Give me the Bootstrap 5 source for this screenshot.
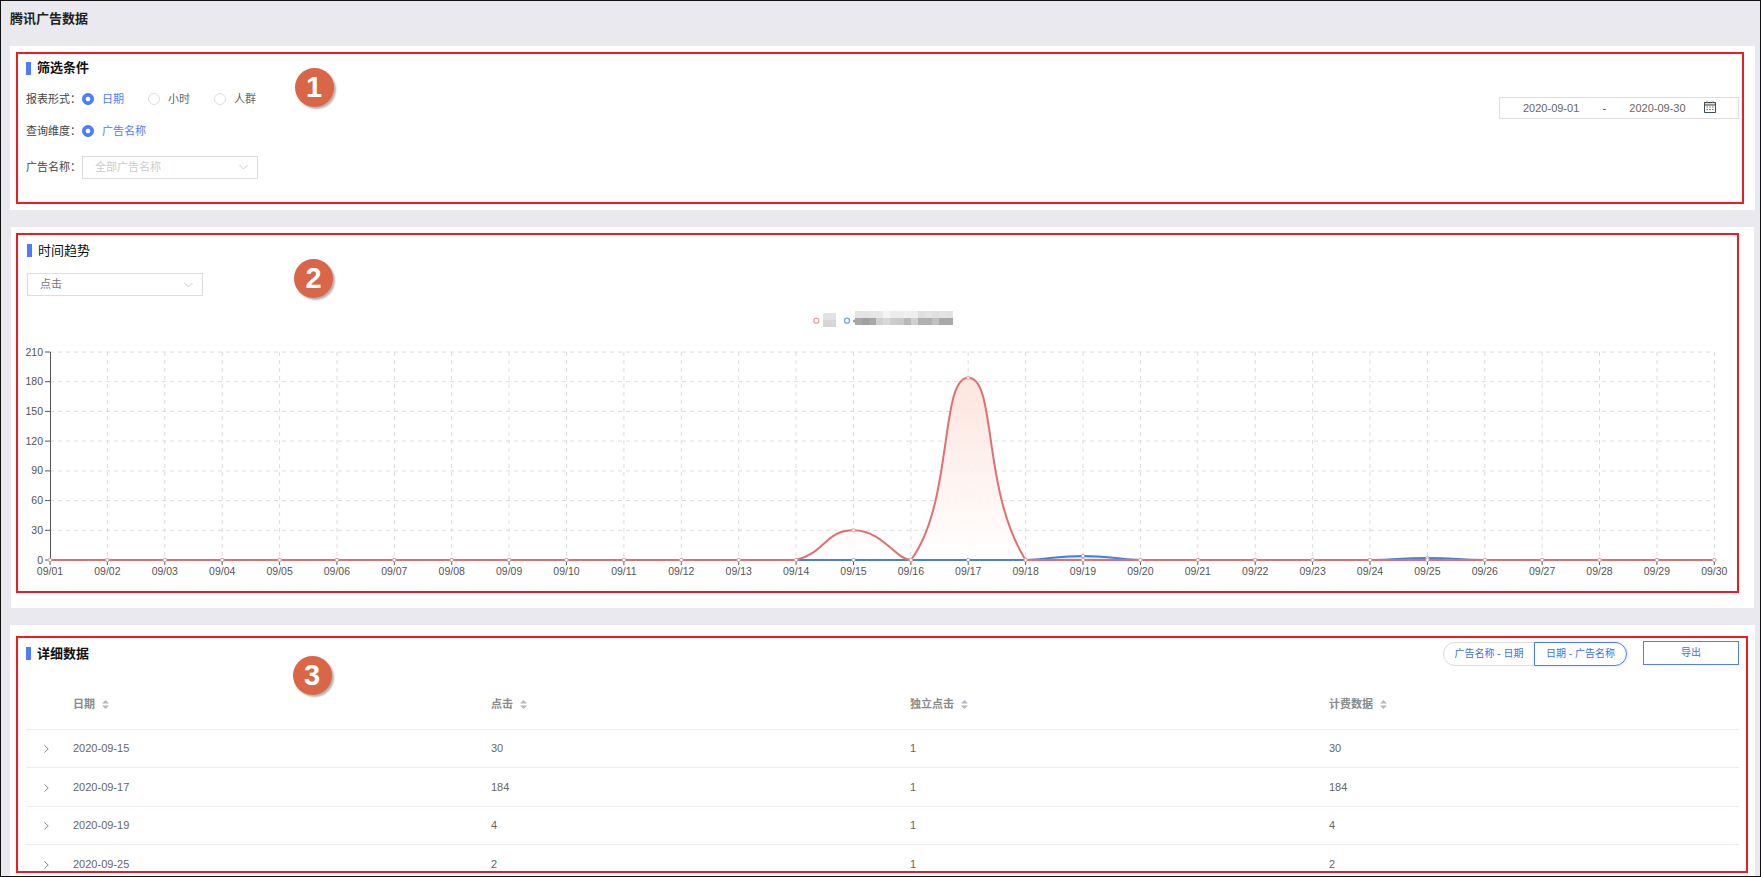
<!DOCTYPE html>
<html lang="zh">
<head>
<meta charset="utf-8">
<title>腾讯广告数据</title>
<link href="https://cdn.jsdelivr.net/npm/bootstrap@5.3.0/dist/css/bootstrap.min.css" rel="stylesheet">
<style>
html,body{margin:0;height:877px;overflow:hidden;background:#e9e9ef}
body{font-family:"Liberation Sans","Noto Sans CJK SC",sans-serif;font-size:11px;color:#555}
.shot{height:877px;overflow:hidden;border:1px solid #111;position:relative;background:#e9e9ef}
.page-title{height:45px;padding:9px 0 0 9px;font-size:13px;font-weight:700;line-height:18px;color:#222}
.pane{background:#fff;position:relative}
.pane-a{margin:0 5px 0 9px;height:164px;padding:6px 11px 0 6px}
.pane-b{margin:17px 6px 0 10px;height:381px;padding:6px 15px 0 5px}
.pane-c{margin:17px 5px 0 9px;padding:11px 7px 3px 6px}
.redbox{border:2px solid #ed1c24;overflow:hidden}
.pane-a .redbox{height:152px;padding:0 3px 0 8px}
.pane-b .redbox{height:360px;padding:0 0 0 9px}
.pane-c .redbox{height:237px;padding:0 7px 0 8px}
.head-line{height:28px;display:flex;align-items:center;font-size:13px;line-height:18px;color:#111}
.pane-b .head-line{height:31px}
.head-line i{display:block;width:5px;height:13px;background:#4f7bff;margin-right:6px}
.head-strong{font-weight:700}
.filter-row{height:24px;display:flex;align-items:center;color:#444;font-size:11px}
.filter-first{margin-top:5px}
.filter-second{margin-top:8px}
.filter-third{margin-top:12px}
.filter-row .form-check-input{width:12px;height:12px;margin:0 8px 0 0;border-color:#ddd;flex:none}
.filter-row .form-check-input:checked{background-color:#4f7bff;border-color:#4f7bff;background-image:radial-gradient(circle,#fff 2px,#4f7bff 2.7px)}
.filter-row label{margin-right:24px;line-height:14px;color:#666}
.filter-row .is-on{color:#4f7bff}
.filter-label{width:56px;flex:none;color:#444}
.fake-select{height:23px;border:1px solid #ddd;display:flex;align-items:center;justify-content:space-between;background:#fff}
.sel-wide{width:176px;padding:0 9px 0 12px;color:#ccc}
.sel-chart{width:176px;padding:0 9px 0 12px;color:#777;margin-top:7px}
.date-box{width:240px;height:22px;border:1px solid #ddd;margin-top:43px;display:flex;align-items:center;padding-left:23px;color:#666;white-space:nowrap;flex:none}
.date-box b{font-weight:400;width:50px;text-align:center;color:#444}
.date-box svg{margin-left:18px;margin-top:-2px;flex:none}
.chart-svg{display:block;margin:4px 0 0 -9px}
.chart-svg text{font-family:"Liberation Sans",sans-serif;font-size:10.5px;fill:#555}
.seg-group .btn{font-size:10px;line-height:14px;height:24px;padding:4px 0;color:#3f6ff0;background:#fff;border-color:#ddd;border-radius:12px;white-space:nowrap;--bs-btn-border-width:1px}
.seg-group .btn.seg-on{border-color:#4f7bff;box-shadow:0 0 3px rgba(79,123,255,.25);width:93px}
.seg-group .btn:first-child{width:92px}
.export-btn{font-size:10px;line-height:14px;width:96px;height:24px;padding:4px;border:1px solid #4f7bff;border-radius:0;color:#3f6ff0;background:#fff;margin-left:16px;margin-top:-1px}
.top-row{display:flex;justify-content:space-between;height:31px;align-items:center}
.top-tools{display:flex;align-items:center}
.data-table{table-layout:fixed;width:1713px;margin:0;font-size:11px;color:#666;--bs-table-color:#666}
.data-table th{height:60px;padding:10px 0 0 8px;font-weight:700;color:#8a8a8a;border-bottom:1px solid #ebecf3;vertical-align:middle}
.data-table td{height:38.5px;padding:0 0 0 8px;border-bottom:1px solid #ebecf3;vertical-align:middle}
.data-table td:first-child{padding-left:18px}
.sort-icon{margin-left:7px;vertical-align:-1px}
.badge-num{position:absolute;width:39px;height:39px;border-radius:50%;background:#d96646;color:#fff;font-family:"Liberation Sans",sans-serif;font-weight:700;font-size:29px;line-height:39px;text-align:center;box-shadow:2px 2px 2px rgba(0,0,0,.3)}
.num-1{left:284.500px;top:21.500px}
.num-2{left:283px;top:31.500px}
.num-3{left:282.500px;top:30.500px}
</style>
</head>
<body>
<div class="shot">
  <div class="page-title">腾讯广告数据</div>

  <section class="pane pane-a">
    <div class="redbox">
      <div class="d-flex justify-content-between">
        <div>
          <div class="head-line head-strong"><i></i>筛选条件</div>
          <div class="filter-row filter-first">
            <span class="filter-label">报表形式：</span>
            <input class="form-check-input" type="radio" name="r1" id="r11" checked><label for="r11" class="is-on">日期</label>
            <input class="form-check-input" type="radio" name="r1" id="r12"><label for="r12">小时</label>
            <input class="form-check-input" type="radio" name="r1" id="r13"><label for="r13">人群</label>
          </div>
          <div class="filter-row filter-second">
            <span class="filter-label">查询维度：</span>
            <input class="form-check-input" type="radio" name="r2" id="r21" checked><label for="r21" class="is-on">广告名称</label>
          </div>
          <div class="filter-row filter-third">
            <span class="filter-label">广告名称：</span>
            <div class="fake-select sel-wide"><span>全部广告名称</span>
              <svg width="9" height="6" viewBox="0 0 9 6"><path d="M.5 1l4 4 4-4" fill="none" stroke="#ccc"/></svg></div>
          </div>
        </div>
        <div class="date-box">
          <span>2020-09-01</span><b>-</b><span>2020-09-30</span>
          <svg width="12" height="12" viewBox="0 0 12 12"><path d="M.5 1.500h11v10H.5z" fill="#fff" stroke="#3a4a5a"/><path d="M.5 1.500h11v2.500H.5z" fill="#e6dcc0" stroke="#3a4a5a"/><path d="M3 0v2M9 0v2" stroke="#b8864a"/><path d="M2.500 6h1.500M5.250 6h1.500M8 6h1.500M2.500 8.500h1.500M5.250 8.500h1.500M8 8.500h1.500" stroke="#667"/></svg>
        </div>
      </div>
      <div class="badge-num num-1">1</div>
    </div>
  </section>

  <section class="pane pane-b">
    <div class="redbox">
      <div class="head-line"><i></i>时间趋势</div>
      <div class="fake-select sel-chart"><span>点击</span>
        <svg width="9" height="6" viewBox="0 0 9 6"><path d="M.5 1l4 4 4-4" fill="none" stroke="#ccc"/></svg></div>
      <svg id="trend" class="chart-svg" width="1719" height="291" viewBox="18 300 1719 291"></svg>
      <div class="badge-num num-2">2</div>
    </div>
  </section>

  <section class="pane pane-c">
    <div class="redbox">
      <div class="top-row">
        <div class="head-line head-strong"><i></i>详细数据</div>
        <div class="top-tools">
          <div class="btn-group seg-group" role="group">
            <button type="button" class="btn">广告名称 - 日期</button>
            <button type="button" class="btn seg-on">日期 - 广告名称</button>
          </div>
          <button type="button" class="btn export-btn">导出</button>
        </div>
      </div>
      <table class="table data-table">
        <colgroup><col style="width:39px"><col style="width:418px"><col style="width:419px"><col style="width:419px"><col style="width:418px"></colgroup>
        <thead id="thead"></thead>
        <tbody id="tbody"></tbody>
      </table>
      <div class="badge-num num-3">3</div>
    </div>
  </section>
</div>

<script>
(function(){
  var out=[];
  var X=function(i){return 50+57.39*i}, Y=function(v){return 560-v*208/210};
  var i;
  for(i=1;i<=7;i++){out.push('<path d="M50 '+Y(i*30).toFixed(1)+'H1714.3" stroke="#dcdcdc" stroke-dasharray="4 4" fill="none"/>');}
  for(i=1;i<30;i++){out.push('<path d="M'+X(i).toFixed(1)+' 352V560" stroke="#dcdcdc" stroke-dasharray="4 4" fill="none"/>');}
  out.push('<path d="M50.500 352V560" stroke="#555" fill="none"/>');
  for(i=0;i<=7;i++){var y=Y(i*30);out.push('<path d="M45 '+y.toFixed(1)+'H50" stroke="#555"/>');
    out.push('<text x="43" y="'+(y+3.5).toFixed(1)+'" text-anchor="end">'+(i*30)+'</text>');}
  for(i=0;i<30;i++){var d=i+1;out.push('<path d="M'+X(i).toFixed(1)+' 560V565" stroke="#555"/>');
    out.push('<text x="'+X(i).toFixed(1)+'" y="574.500" text-anchor="middle">09/'+(d<10?'0':'')+d+'</text>');}
  function series(vals){var a=[];for(var k=0;k<30;k++)a.push([X(k),Y(vals[k+1]||0)]);return a;}
  function curve(p){
    var s=.5,ys=p.map(function(q){return q[1]}),mn=Math.min.apply(0,ys),mx=Math.max.apply(0,ys),d='M'+p[0][0].toFixed(1)+' '+p[0][1].toFixed(1);
    function cps(j){var a=p[Math.max(j-1,0)],b=p[j],c=p[Math.min(j+1,p.length-1)];
      var vx=c[0]-a[0],vy=c[1]-a[1],l1=Math.hypot(b[0]-a[0],b[1]-a[1]),l2=Math.hypot(c[0]-b[0],c[1]-b[1]),r=(l1+l2)?l2/(l1+l2):.5;
      var cl=function(v){return Math.min(mx,Math.max(mn,v))};
      return {nx:b[0]+vx*s*r,ny:cl(b[1]+vy*s*r),px:b[0]-vx*s*(1-r),py:cl(b[1]-vy*s*(1-r))};}
    for(var j=0;j<p.length-1;j++){var A=cps(j),B=cps(j+1);
      d+='C'+A.nx.toFixed(1)+' '+A.ny.toFixed(1)+' '+B.px.toFixed(1)+' '+B.py.toFixed(1)+' '+p[j+1][0].toFixed(1)+' '+p[j+1][1].toFixed(1);}
    return d;
  }
  var red=series({15:30,17:184}), blue=series({19:4,25:2});
  out.push('<defs><linearGradient id="gr" x1="0" y1="0" x2="0" y2="1"><stop offset="0" stop-color="#fde2da"/><stop offset="1" stop-color="#fff"/></linearGradient><linearGradient id="gb" x1="0" y1="0" x2="0" y2="1"><stop offset="0" stop-color="#a9c4f0"/><stop offset="1" stop-color="#fff"/></linearGradient></defs>');
  function draw(p,g){var d=curve(p);
    out.push('<path d="'+d+'V560H50Z" fill="url(#'+g+')" opacity=".9"/>');
    return d;}
  var db=draw(blue,'gb'), dr=draw(red,'gr');
  out.push('<path d="'+db+'" fill="none" stroke="#4a7fd6" stroke-width="2"/>');
  out.push('<path d="'+dr+'" fill="none" stroke="#e26f6f" stroke-width="2"/>');
  blue.forEach(function(q){out.push('<circle cx="'+q[0].toFixed(1)+'" cy="'+q[1].toFixed(1)+'" r="1.700" fill="#fff" stroke="#7ba3e6" stroke-width=".8"/>')});
  red.forEach(function(q){out.push('<circle cx="'+q[0].toFixed(1)+'" cy="'+q[1].toFixed(1)+'" r="1.700" fill="#fff" stroke="#e88f8f" stroke-width=".8"/>')});
  out.push('<circle cx="816.300" cy="320.700" r="2.500" fill="#fff" stroke="#f0a0a0" stroke-width="1.300"/>');
  out.push('<circle cx="847" cy="320.700" r="2.500" fill="#fff" stroke="#7aa2e2" stroke-width="1.300"/>');
  out.push('<rect x="823" y="313" width="13" height="7" fill="#e2e2e2"/><rect x="823" y="320" width="13" height="7" fill="#d6d6d6"/>');
  out.push('<circle cx="854.500" cy="321" r="1.500" fill="#999"/>');
  var t=['e4','e4','e6','e8','f4','ec','ec','f0','ee','e0','e4','e0','e4','e2'],b=['a8','a0','a8','d0','d8','cc','c8','b8','d0','b0','b0','c0','a8','a8'];
  for(i=0;i<14;i++){out.push('<rect x="'+(855+i*7)+'" y="311" width="7" height="7" fill="#'+t[i]+t[i]+t[i]+'"/>');
    out.push('<rect x="'+(855+i*7)+'" y="318" width="7" height="7" fill="#'+b[i]+b[i]+b[i]+'"/>');}
  document.getElementById('trend').innerHTML=out.join('');

  var sort='<svg class="sort-icon" width="7" height="9" viewBox="0 0 7 9"><path d="M3.500 0L7 3.500H0zM3.500 9L0 5.500h7z" fill="#b4b8c4"/></svg>';
  document.getElementById('thead').innerHTML='<tr><th></th>'+['日期','点击','独立点击','计费数据'].map(function(h){return '<th>'+h+sort+'</th>'}).join('')+'</tr>';
  var chev='<svg width="5" height="8" viewBox="0 0 5 8"><path d="M.5.500L4.200 4 .5 7.500" fill="none" stroke="#888"/></svg>';
  var rows=[['2020-09-15',30,1,30],['2020-09-17',184,1,184],['2020-09-19',4,1,4],['2020-09-25',2,1,2]];
  document.getElementById('tbody').innerHTML=rows.map(function(r){return '<tr><td>'+chev+'</td>'+r.map(function(c){return '<td>'+c+'</td>'}).join('')+'</tr>'}).join('');
})();
</script>
<script src="https://cdn.jsdelivr.net/npm/bootstrap@5.3.0/dist/js/bootstrap.bundle.min.js"></script>
</body>
</html>
